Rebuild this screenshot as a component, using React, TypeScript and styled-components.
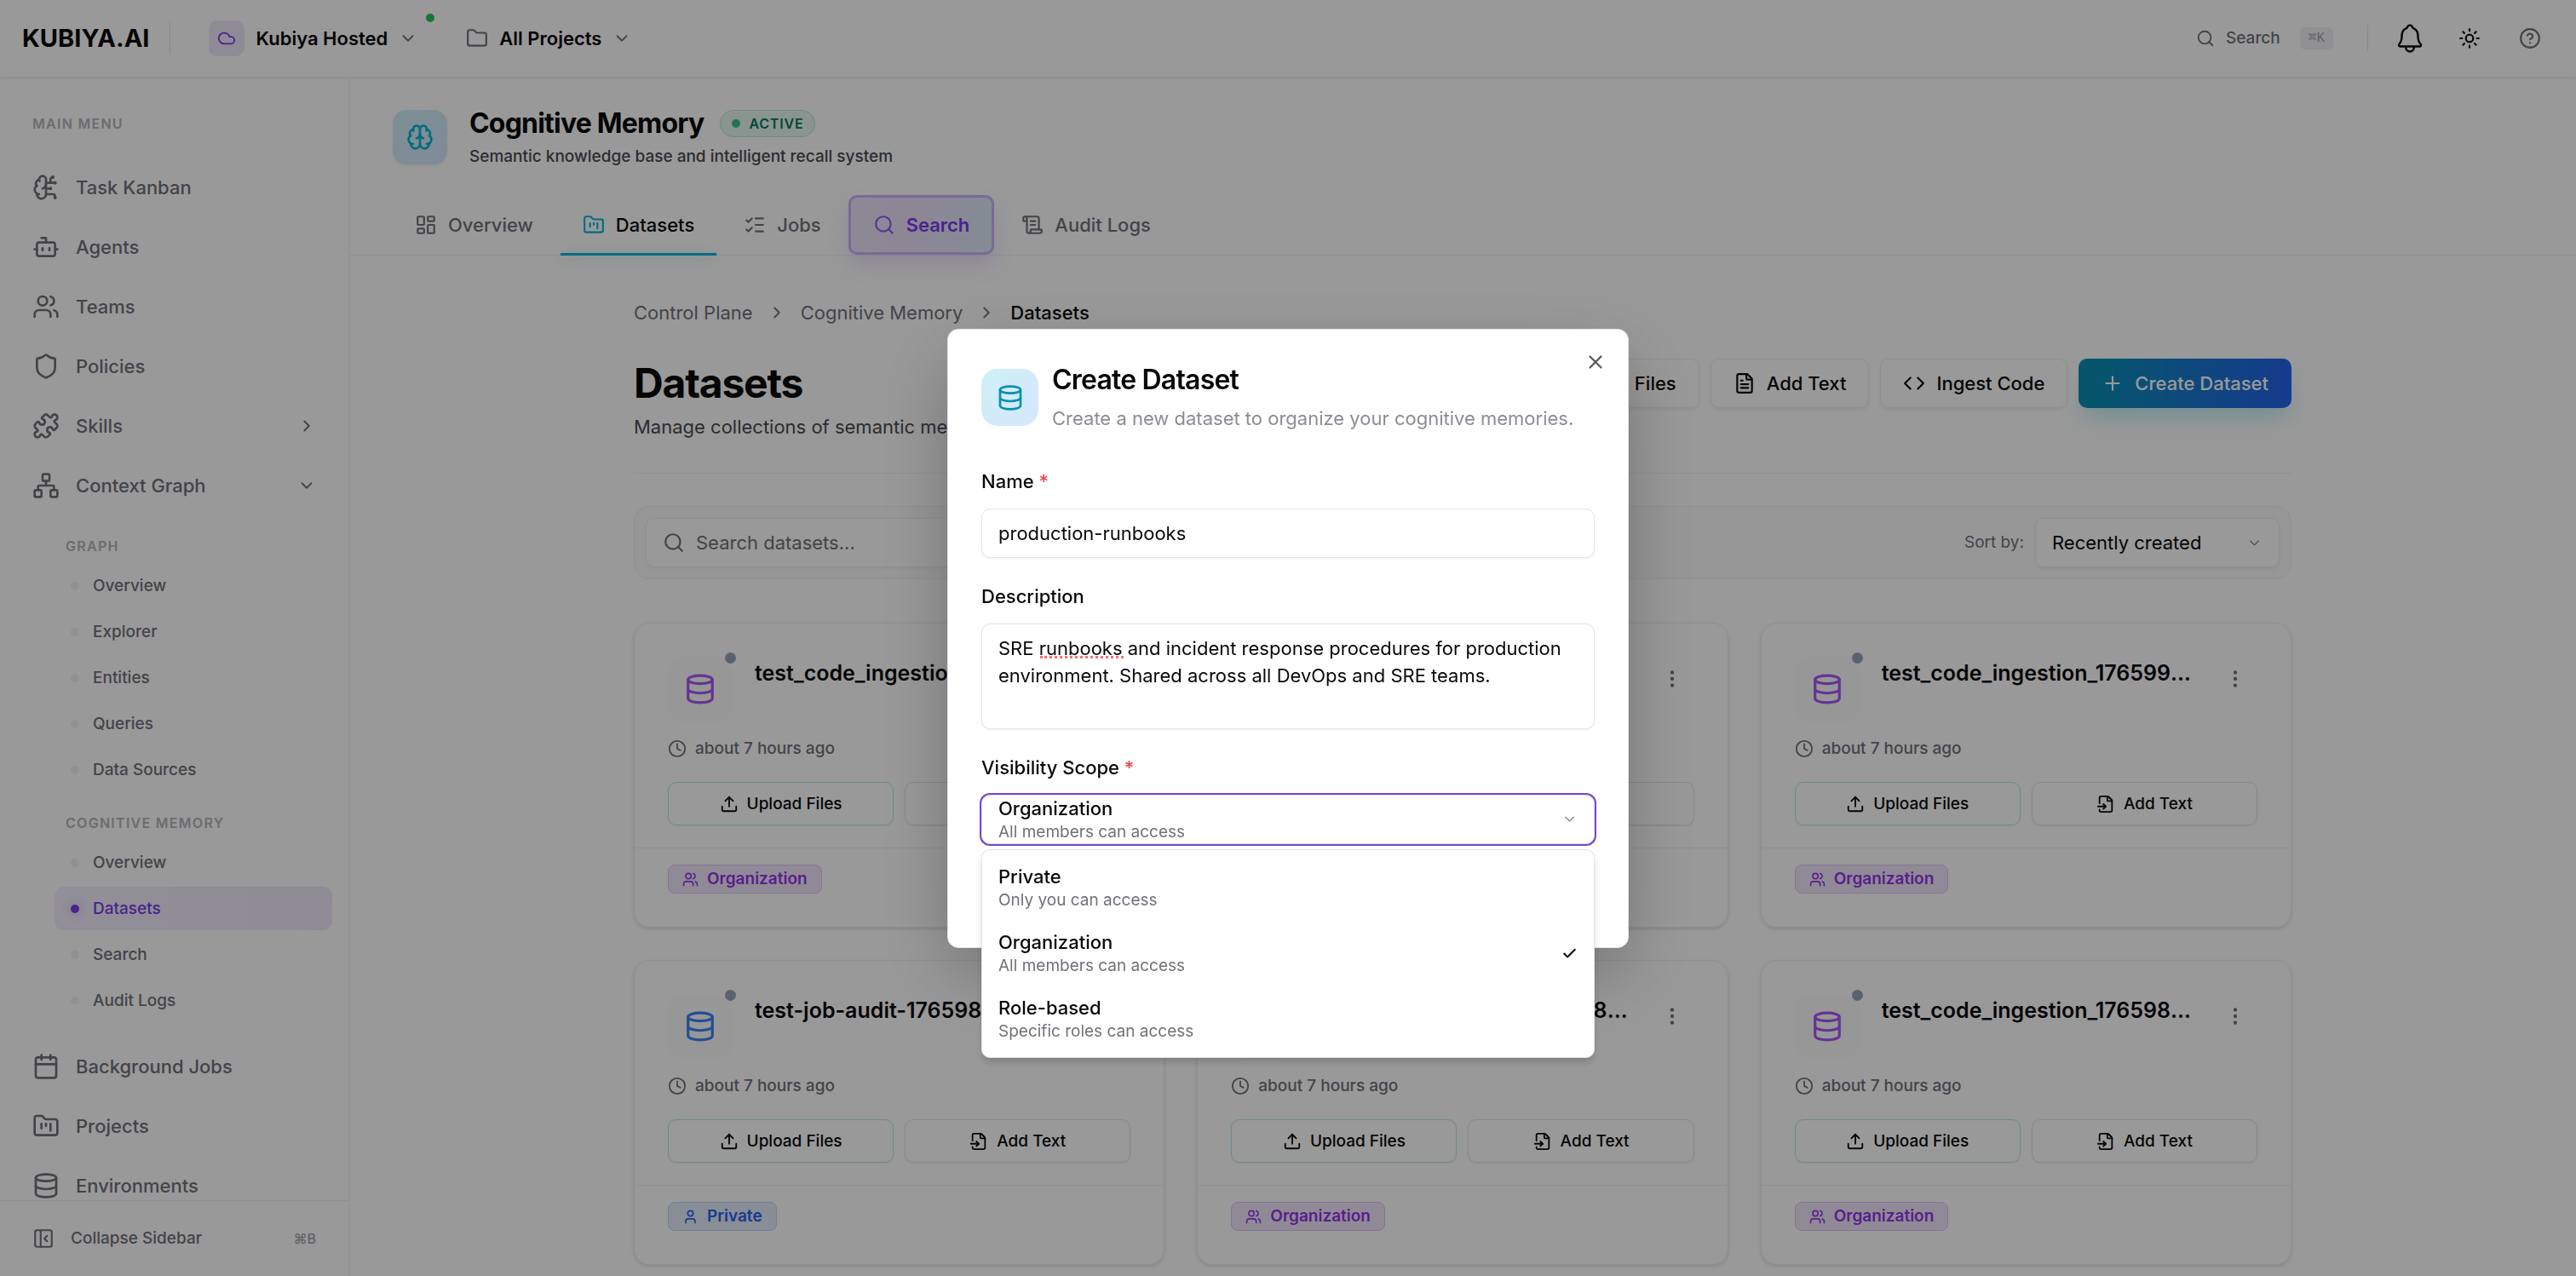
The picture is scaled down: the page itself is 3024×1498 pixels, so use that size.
import React from "react";
import styled, { createGlobalStyle, css } from "styled-components";
import {
  Bot,
  Brain,
  BrainCircuit,
  Calendar,
  Check,
  ChevronDown,
  ChevronRight,
  CircleHelp,
  Clock,
  Cloud,
  Code,
  Database,
  EllipsisVertical,
  FileInput,
  FileText,
  Folder,
  FolderKanban,
  LayoutDashboard,
  ListChecks,
  Network,
  PanelLeftClose,
  Plus,
  Puzzle,
  ScrollText,
  Search,
  Shield,
  Sun,
  Upload,
  User,
  Users,
  X,
} from "lucide-react";
import { IoNotificationsOutline } from "react-icons/io5";

const color = {
  ink: "#09090b",
  soft: "#4a4a52",
  muted: "#71717a",
  faint: "#b4b4ba",
  line: "#f0f0f2",
  edge: "#e4e4e7",
  violet: "#7c3aed",
  cyan: "#06b6d4",
};

const GlobalStyle = createGlobalStyle`
  *, *::before, *::after { box-sizing: border-box; }
  html, body, #root { height: 100%; }
  body {
    margin: 0;
    background: #fff;
    color: ${color.ink};
    font-family: Inter, "Liberation Sans", sans-serif;
    font-optical-sizing: none;
    font-size: 22px;
    line-height: 32px;
    -webkit-font-smoothing: antialiased;
  }
  h1, h2, h3, p, ul { margin: 0; padding: 0; }
  ul { list-style: none; }
  a { color: inherit; text-decoration: none; }
  button, input, textarea, select { font: inherit; color: inherit; margin: 0; }
  button { background: none; border: 0; padding: 0; cursor: pointer; }
  svg { flex: none; display: block; }
`;

const Page = styled.div`
  height: 100%;
  display: flex;
  flex-direction: column;
  overflow: hidden;
`;

/* Top bar */

const TopBar = styled.header`
  flex: none;
  height: 91px;
  padding: 0 41px 0 26px;
  display: flex;
  align-items: center;
  justify-content: space-between;
  border-bottom: 1px solid ${color.line};
  box-shadow: 0 2px 3px rgba(0, 0, 0, 0.04);
`;

const BarGroup = styled.div<{ $gap: number }>`
  display: flex;
  align-items: center;
  gap: ${(p) => p.$gap}px;
`;

const Logo = styled.a`
  font-size: 29px;
  font-weight: 700;
`;

const BarDivider = styled.span<{ $height: number }>`
  width: 1px;
  height: ${(p) => p.$height}px;
  background: ${color.edge};
`;

const Switcher = styled.button`
  position: relative;
  display: flex;
  align-items: center;
  gap: 13px;
  font-weight: 600;

  > svg {
    color: ${color.muted};
  }
`;

const CloudBox = styled.span`
  width: 42px;
  height: 42px;
  display: grid;
  place-items: center;
  border-radius: 10px;
  background: #efe8fb;
  color: ${color.violet};
`;

const OnlineDot = styled.span`
  position: absolute;
  top: -8px;
  right: -20px;
  width: 10px;
  height: 10px;
  border-radius: 50%;
  background: #22c55e;
`;

const SearchButton = styled.button`
  display: flex;
  align-items: center;
  gap: 13px;
  color: ${color.muted};
  font-size: 19px;
  line-height: 26px;
  font-weight: 500;
`;

const Kbd = styled.kbd`
  margin-left: 10px;
  padding: 2px 10px;
  border-radius: 6px;
  background: #f1f1f3;
  color: #a1a1aa;
  font: 16px/22px "Liberation Mono", monospace;
`;

const IconButton = styled.button<{ $size: number; $muted?: boolean }>`
  width: ${(p) => p.$size}px;
  height: ${(p) => p.$size}px;
  display: grid;
  place-items: center;
  color: ${(p) => (p.$muted ? color.muted : color.ink)};
`;

/* Sidebar */

const Body = styled.div`
  flex: 1;
  min-height: 0;
  display: flex;
`;

const Sidebar = styled.aside`
  flex: none;
  width: 410px;
  display: flex;
  flex-direction: column;
  border-right: 1px solid ${color.line};
`;

const Nav = styled.nav`
  flex: 1;
  min-height: 0;
  overflow: hidden;
  padding: 43px 19px 0;
`;

const SectionLabel = styled.h2<{ $sub?: boolean }>`
  padding: ${(p) => (p.$sub ? "0 13px" : "0 19px")};
  margin: ${(p) => (p.$sub ? "26px 0 10px" : "0 0 32px")};
  color: ${color.faint};
  font-size: 16px;
  line-height: 22px;
  font-weight: 600;
  letter-spacing: 0.08em;
  text-transform: uppercase;
`;

const NavList = styled.ul`
  display: flex;
  flex-direction: column;
  gap: 6px;
`;

const NavLink = styled.a`
  height: 64px;
  padding: 0 19px;
  display: flex;
  align-items: center;
  gap: 19px;
  color: ${color.muted};
  font-weight: 500;

  svg:nth-of-type(2) {
    margin-left: auto;
  }
`;

const SubNav = styled.div`
  padding: 2px 0 20px 45px;
`;

const SubList = styled.ul`
  display: flex;
  flex-direction: column;
  gap: 3px;
`;

const SubLink = styled.a<{ $active: boolean }>`
  height: 51px;
  padding: 0 19px;
  display: flex;
  align-items: center;
  gap: 16px;
  border-radius: 11px;
  color: ${color.muted};
  font-size: 19px;
  line-height: 26px;
  font-weight: 500;

  &::before {
    content: "";
    width: 10px;
    height: 10px;
    border-radius: 50%;
    background: #f2f2f4;
  }

  ${(p) =>
    p.$active &&
    css`
      background: linear-gradient(90deg, #f4effe, #eee8f9);
      color: ${color.violet};

      &::before {
        background: ${color.violet};
        box-shadow: 0 0 13px rgba(124, 58, 237, 0.4);
      }
    `}
`;

const CollapseButton = styled.button`
  flex: none;
  height: 89px;
  padding: 0 38px;
  display: flex;
  align-items: center;
  gap: 19px;
  border-top: 1px solid ${color.line};
  color: ${color.muted};
  font-size: 19px;
  line-height: 26px;
  font-weight: 500;
`;

const Shortcut = styled.span`
  margin-left: auto;
  color: #a1a1aa;
  font-size: 16px;
  line-height: 22px;
`;

/* Main column */

const Main = styled.main`
  flex: 1;
  min-width: 0;
  overflow: hidden;
`;

const Hero = styled.section`
  padding: 33px 51px 32px;
  display: flex;
  align-items: center;
  gap: 26px;
`;

const HeroIcon = styled.span`
  width: 64px;
  height: 64px;
  display: grid;
  place-items: center;
  border-radius: 16px;
  background: linear-gradient(135deg, rgba(6, 182, 212, 0.2), rgba(59, 130, 246, 0.2));
  box-shadow: 0 2px 3px rgba(0, 0, 0, 0.06);
  color: ${color.cyan};
`;

const HeroTitleRow = styled.div`
  display: flex;
  align-items: center;
  gap: 19px;
`;

const HeroTitle = styled.h2`
  font-size: 32px;
  line-height: 42px;
  font-weight: 700;
  letter-spacing: -0.025em;
`;

const HeroText = styled.p`
  margin-top: 5px;
  color: ${color.soft};
  font-size: 19px;
  line-height: 26px;
  font-weight: 500;
`;

const Status = styled.span`
  height: 32px;
  padding: 0 13px;
  display: flex;
  align-items: center;
  gap: 10px;
  border: 1px solid #b5e6d3;
  border-radius: 16px;
  background: #e6f8f1;
  color: #047857;
  font-size: 16px;
  line-height: 22px;
  font-weight: 600;
  letter-spacing: 0.05em;
  text-transform: uppercase;

  &::before {
    content: "";
    width: 10px;
    height: 10px;
    border-radius: 50%;
    background: #3fbf8f;
  }
`;

const Tabs = styled.nav`
  padding: 0 51px;
  display: flex;
  gap: 6px;
  border-bottom: 1px solid ${color.line};
`;

const Tab = styled.a<{ $kind?: "active" | "accent" }>`
  position: relative;
  height: 70px;
  padding: 0 26px;
  display: flex;
  align-items: center;
  gap: 13px;
  color: ${color.muted};
  font-weight: 500;

  ${(p) =>
    p.$kind === "active" &&
    css`
      color: ${color.ink};

      svg {
        color: ${color.cyan};
      }

      &::after {
        content: "";
        position: absolute;
        left: 0;
        right: 0;
        bottom: -1px;
        height: 3px;
        background: ${color.cyan};
        box-shadow: 0 3px 16px rgba(6, 182, 212, 0.35);
      }
    `}

  ${(p) =>
    p.$kind === "accent" &&
    css`
      border: 3px solid #c8b2f7;
      border-radius: 10px;
      background: linear-gradient(90deg, #ebe4fb, #ece0f9 40%, #dde9f9);
      box-shadow: 0 13px 26px -3px rgba(139, 92, 246, 0.22);
      color: ${color.violet};
      font-weight: 600;

      svg {
        color: #8b5cf6;
      }
    `}
`;

const Content = styled.div`
  max-width: 2048px;
  margin: 0 auto;
  padding: 51px 51px 0;
`;

const Crumbs = styled.nav`
  display: flex;
  align-items: center;
  gap: 17px;
  color: ${color.muted};

  [aria-current] {
    color: ${color.ink};
    font-weight: 500;
  }
`;

const TitleRow = styled.div`
  padding: 32px 0 38px;
  display: flex;
  align-items: flex-start;
  justify-content: space-between;
  border-bottom: 1px solid ${color.line};
`;

const PageTitle = styled.h1`
  margin: 6px 0;
  font-size: 48px;
  line-height: 58px;
  font-weight: 700;
  letter-spacing: -0.025em;
`;

const PageText = styled.p`
  color: ${color.soft};
`;

const Actions = styled.div`
  padding-top: 6px;
  display: flex;
  gap: 13px;
`;

const ActionButton = styled.button<{ $primary?: boolean }>`
  height: 58px;
  padding: 0 26px;
  display: flex;
  align-items: center;
  gap: 13px;
  border: 1px solid ${color.line};
  border-radius: 10px;
  box-shadow: 0 2px 4px rgba(0, 0, 0, 0.06);
  font-weight: 500;

  ${(p) =>
    p.$primary &&
    css`
      border-color: transparent;
      background: linear-gradient(90deg, #0891b2, #2563eb) border-box;
      box-shadow: 0 16px 24px -5px rgba(6, 182, 212, 0.25);
      color: #fff;
    `}
`;

const Toolbar = styled.div`
  margin: 38px 0 51px;
  padding: 13px;
  display: flex;
  align-items: center;
  justify-content: space-between;
  border: 1px solid ${color.line};
  border-radius: 19px;
  background: #fcfcfd;
`;

const SearchField = styled.label`
  width: 640px;
  height: 58px;
  padding: 0 19px;
  display: flex;
  align-items: center;
  gap: 13px;
  border: 1px solid ${color.line};
  border-radius: 10px;
  background: #fff;
  box-shadow: 0 2px 4px rgba(0, 0, 0, 0.04);
  color: ${color.muted};

  input {
    flex: 1;
    min-width: 0;
    padding: 0;
    border: 0;
    outline: 0;
    background: none;
  }

  input::placeholder {
    color: ${color.muted};
    opacity: 1;
  }
`;

const SortGroup = styled.div`
  display: flex;
  align-items: center;
  gap: 13px;

  label {
    color: ${color.muted};
    font-size: 19px;
    line-height: 26px;
  }
`;

const SelectWrap = styled.div`
  width: 287px;
  height: 58px;
  display: grid;
  align-items: center;
  border: 1px solid ${color.line};
  border-radius: 10px;
  background: #fff;
  box-shadow: 0 2px 4px rgba(0, 0, 0, 0.06);

  select,
  svg {
    grid-area: 1 / 1;
  }

  select {
    height: 100%;
    padding: 0 19px;
    border: 0;
    background: none;
    appearance: none;
  }

  svg {
    justify-self: end;
    margin-right: 19px;
    color: ${color.muted};
    pointer-events: none;
  }
`;

/* Dataset cards */

const Grid = styled.div`
  display: grid;
  grid-template-columns: repeat(3, minmax(0, 1fr));
  gap: 38px;
`;

const Card = styled.article`
  border: 1px solid ${color.line};
  border-radius: 19px;
  box-shadow: 0 2px 4px rgba(0, 0, 0, 0.12);
`;

const CardBody = styled.div`
  padding: 39px 39px 26px;
`;

const CardTop = styled.div`
  display: flex;
  align-items: flex-start;
`;

const CardIcon = styled.span<{ $private?: boolean }>`
  position: relative;
  flex: none;
  width: 76px;
  height: 76px;
  margin-right: 26px;
  display: grid;
  place-items: center;
  border-radius: 19px;
  background: #fcfcfd;
  color: ${(p) => (p.$private ? "#3b82f6" : "#a855f7")};
`;

const StateDot = styled.span`
  position: absolute;
  top: -5px;
  right: -4px;
  width: 13px;
  height: 13px;
  border-radius: 50%;
  background: #94a3b8;
`;

const CardTitle = styled.h3`
  flex: 1;
  min-width: 0;
  margin-right: 13px;
  overflow: hidden;
  text-overflow: ellipsis;
  white-space: nowrap;
  font-size: 25px;
  line-height: 38px;
  font-weight: 600;
`;

const Meta = styled.p`
  margin: 19px 0 26px;
  display: flex;
  align-items: center;
  gap: 10px;
  color: ${color.muted};
  font-size: 19px;
  line-height: 26px;
  font-weight: 500;
`;

const CardActions = styled.div`
  display: grid;
  grid-template-columns: 1fr 1fr;
  gap: 13px;
`;

const CardButton = styled.button<{ $tint?: boolean }>`
  height: 51px;
  display: flex;
  align-items: center;
  justify-content: center;
  gap: 10px;
  border: 1px solid ${(p) => (p.$tint ? "#b4e6ee" : color.edge)};
  border-radius: 10px;
  box-shadow: 0 1px 2px rgba(0, 0, 0, 0.06);
  font-size: 19px;
  line-height: 26px;
  font-weight: 500;
`;

const CardFoot = styled.footer`
  padding: 19px 39px 39px;
  display: flex;
  border-top: 1px solid ${color.line};
`;

const Badge = styled.span<{ $private?: boolean }>`
  height: 34px;
  padding: 0 16px;
  display: flex;
  align-items: center;
  gap: 10px;
  border: 1px solid ${(p) => (p.$private ? "#bcd3fb" : "#dcc2f8")};
  border-radius: 8px;
  background: ${(p) => (p.$private ? "#e3ebfa" : "#f1e7fb")};
  color: ${(p) => (p.$private ? "#2563eb" : "#9333ea")};
  font-size: 19px;
  line-height: 26px;
  font-weight: 600;
`;

/* Dialog */

const Overlay = styled.div`
  position: fixed;
  inset: 0;
  display: flex;
  align-items: center;
  justify-content: center;
  background: rgba(0, 0, 0, 0.4);
`;

const Dialog = styled.div`
  position: relative;
  width: 800px;
  max-width: 100%;
  padding: 40px 39px 121px;
  border: 1px solid ${color.edge};
  border-radius: 13px;
  background: #fff;
  box-shadow: 0 32px 88px -8px rgba(0, 0, 0, 0.3);
`;

const CloseButton = styled.button`
  position: absolute;
  top: 25px;
  right: 25px;
  color: #55555c;
`;

const DialogHead = styled.div`
  margin-bottom: 42px;
  display: flex;
  align-items: center;
  gap: 16px;
`;

const DialogIcon = styled.span`
  width: 67px;
  height: 67px;
  display: grid;
  place-items: center;
  border-radius: 19px;
  background: linear-gradient(135deg, rgba(6, 182, 212, 0.2), rgba(59, 130, 246, 0.2));
  color: #0891b2;
`;

const DialogTitle = styled.h2`
  font-size: 32px;
  line-height: 38px;
  font-weight: 600;
  letter-spacing: -0.025em;
`;

const DialogText = styled.p`
  margin-top: 10px;
  color: #8c8c95;
`;

const Form = styled.form`
  display: flex;
  flex-direction: column;
  gap: 29px;
`;

const Field = styled.div`
  position: relative;
  display: flex;
  flex-direction: column;
  gap: 16px;

  label {
    font-weight: 500;
  }
`;

const Required = styled.span`
  color: #ef4444;
`;

const control = css`
  width: 100%;
  border: 1px solid ${color.edge};
  border-radius: 10px;
  background: #fff;
  box-shadow: 0 2px 2px rgba(0, 0, 0, 0.04);
  outline: 0;
`;

const TextInput = styled.input`
  ${control}
  height: 58px;
  padding: 0 19px;
`;

const TextArea = styled.textarea`
  ${control}
  display: block;
  height: 124px;
  padding: 12px 19px;
  resize: none;
`;

const TextAreaWrap = styled.div`
  position: relative;
`;

const SpellMark = styled.span`
  position: absolute;
  top: 38px;
  left: 69px;
  width: 98px;
  border-bottom: 3px dotted #f87171;
`;

const Trigger = styled.button`
  ${control}
  height: 58px;
  padding: 0 19px;
  display: flex;
  align-items: center;
  justify-content: space-between;
  text-align: left;
  box-shadow: 0 0 0 2px #7846d6;

  svg {
    color: ${color.muted};
  }
`;

const Choice = styled.span`
  display: flex;
  flex-direction: column;
  font-weight: 500;
  line-height: 30px;

  small {
    color: ${color.muted};
    font-size: 19px;
    line-height: 26px;
    font-weight: 400;
  }
`;

const Listbox = styled.ul`
  position: absolute;
  top: calc(100% + 6px);
  left: 0;
  right: 0;
  padding: 6px;
  border: 1px solid ${color.edge};
  border-radius: 10px;
  background: #fff;
  box-shadow: 0 6px 10px -2px rgba(0, 0, 0, 0.2);
`;

const Option = styled.li`
  height: 77px;
  padding: 0 13px;
  display: flex;
  align-items: center;
  justify-content: space-between;
`;

const navTop = [
  { label: "Task Kanban", Icon: BrainCircuit },
  { label: "Agents", Icon: Bot },
  { label: "Teams", Icon: Users },
  { label: "Policies", Icon: Shield },
  { label: "Skills", Icon: Puzzle, Chevron: ChevronRight },
  { label: "Context Graph", Icon: Network, Chevron: ChevronDown },
];

const navBottom = [
  { label: "Background Jobs", Icon: Calendar },
  { label: "Projects", Icon: FolderKanban },
  { label: "Environments", Icon: Database },
];

const subSections = [
  { title: "Graph", items: ["Overview", "Explorer", "Entities", "Queries", "Data Sources"] },
  { title: "Cognitive Memory", items: ["Overview", "Datasets", "Search", "Audit Logs"], active: "Datasets" },
];

const tabs: { label: string; Icon: typeof Bot; kind?: "active" | "accent" }[] = [
  { label: "Overview", Icon: LayoutDashboard },
  { label: "Datasets", Icon: FolderKanban, kind: "active" },
  { label: "Jobs", Icon: ListChecks },
  { label: "Search", Icon: Search, kind: "accent" },
  { label: "Audit Logs", Icon: ScrollText },
];

const datasets = [
  { name: "test_code_ingestion_1765992210" },
  { name: "test_code_ingestion_1765994874" },
  { name: "test_code_ingestion_1765990452" },
  { name: "test-job-audit-1765989930-run", isPrivate: true },
  { name: "test_code_ingestion_1765988617" },
  { name: "test_code_ingestion_1765986301" },
];

const scopes = [
  { label: "Private", hint: "Only you can access" },
  { label: "Organization", hint: "All members can access" },
  { label: "Role-based", hint: "Specific roles can access" },
];

function NavItems({ items }: { items: { label: string; Icon: typeof Bot; Chevron?: typeof Bot }[] }) {
  return (
    <NavList>
      {items.map(({ label, Icon, Chevron }) => (
        <li key={label}>
          <NavLink href="#">
            <Icon size={32} />
            {label}
            {Chevron && <Chevron size={22} />}
          </NavLink>
        </li>
      ))}
    </NavList>
  );
}

function DatasetCard({ name, isPrivate }: { name: string; isPrivate?: boolean }) {
  return (
    <Card>
      <CardBody>
        <CardTop>
          <CardIcon $private={isPrivate}>
            <Database size={38} />
            <StateDot />
          </CardIcon>
          <CardTitle>{name}</CardTitle>
          <IconButton $size={51} $muted aria-label="Dataset actions">
            <EllipsisVertical size={26} />
          </IconButton>
        </CardTop>
        <Meta>
          <Clock size={22} />
          about 7 hours ago
        </Meta>
        <CardActions>
          <CardButton $tint>
            <Upload size={22} />
            Upload Files
          </CardButton>
          <CardButton>
            <FileInput size={22} />
            Add Text
          </CardButton>
        </CardActions>
      </CardBody>
      <CardFoot>
        <Badge $private={isPrivate}>
          {isPrivate ? <User size={19} /> : <Users size={19} />}
          {isPrivate ? "Private" : "Organization"}
        </Badge>
      </CardFoot>
    </Card>
  );
}

function CreateDatasetDialog() {
  return (
    <Overlay>
      <Dialog role="dialog" aria-modal="true" aria-labelledby="dialog-title">
        <CloseButton aria-label="Close">
          <X size={26} />
        </CloseButton>
        <DialogHead>
          <DialogIcon>
            <Database size={32} />
          </DialogIcon>
          <div>
            <DialogTitle id="dialog-title">Create Dataset</DialogTitle>
            <DialogText>Create a new dataset to organize your cognitive memories.</DialogText>
          </div>
        </DialogHead>
        <Form>
          <Field>
            <label htmlFor="name">
              Name <Required>*</Required>
            </label>
            <TextInput id="name" defaultValue="production-runbooks" />
          </Field>
          <Field>
            <label htmlFor="description">Description</label>
            <TextAreaWrap>
              <TextArea
                id="description"
                spellCheck={false}
                defaultValue="SRE runbooks and incident response procedures for production environment. Shared across all DevOps and SRE teams."
              />
              <SpellMark />
            </TextAreaWrap>
          </Field>
          <Field>
            <label htmlFor="scope">
              Visibility Scope <Required>*</Required>
            </label>
            <Trigger
              id="scope"
              type="button"
              role="combobox"
              aria-haspopup="listbox"
              aria-expanded="true"
              aria-controls="scope-list"
            >
              <Choice>
                Organization
                <small>All members can access</small>
              </Choice>
              <ChevronDown size={19} strokeWidth={1.5} />
            </Trigger>
            <Listbox id="scope-list" role="listbox">
              {scopes.map((s) => (
                <Option key={s.label} role="option" aria-selected={s.label === "Organization"}>
                  <Choice>
                    {s.label}
                    <small>{s.hint}</small>
                  </Choice>
                  {s.label === "Organization" && <Check size={19} strokeWidth={2.5} />}
                </Option>
              ))}
            </Listbox>
          </Field>
        </Form>
      </Dialog>
    </Overlay>
  );
}

export default function App() {
  return (
    <Page>
      <GlobalStyle />
      <TopBar>
        <BarGroup $gap={45}>
          <BarGroup $gap={24}>
            <Logo href="#">KUBIYA.AI</Logo>
            <BarDivider $height={38} />
          </BarGroup>
          <BarGroup $gap={57}>
            <Switcher>
              <CloudBox>
                <Cloud size={22} />
              </CloudBox>
              Kubiya Hosted
              <ChevronDown size={22} />
              <OnlineDot />
            </Switcher>
            <Switcher>
              <Folder size={26} />
              All Projects
              <ChevronDown size={22} />
            </Switcher>
          </BarGroup>
        </BarGroup>
        <BarGroup $gap={30}>
          <BarGroup $gap={40}>
            <SearchButton>
              <Search size={22} />
              Search
              <Kbd>⌘K</Kbd>
            </SearchButton>
            <BarDivider $height={32} />
          </BarGroup>
          <BarGroup $gap={38}>
            <IconButton $size={38} aria-label="Notifications">
              <IoNotificationsOutline size={38} />
            </IconButton>
            <BarGroup $gap={45}>
              <IconButton $size={26} aria-label="Theme">
                <Sun size={26} />
              </IconButton>
              <IconButton $size={26} $muted aria-label="Help">
                <CircleHelp size={26} />
              </IconButton>
            </BarGroup>
          </BarGroup>
        </BarGroup>
      </TopBar>
      <Body>
        <Sidebar>
          <Nav aria-label="Main menu">
            <SectionLabel>Main Menu</SectionLabel>
            <NavItems items={navTop} />
            <SubNav>
              {subSections.map((section) => (
                <div key={section.title}>
                  <SectionLabel $sub>{section.title}</SectionLabel>
                  <SubList>
                    {section.items.map((item) => (
                      <li key={item}>
                        <SubLink href="#" $active={item === section.active}>
                          {item}
                        </SubLink>
                      </li>
                    ))}
                  </SubList>
                </div>
              ))}
            </SubNav>
            <NavItems items={navBottom} />
          </Nav>
          <CollapseButton>
            <PanelLeftClose size={26} />
            Collapse Sidebar
            <Shortcut>⌘B</Shortcut>
          </CollapseButton>
        </Sidebar>
        <Main>
          <Hero>
            <HeroIcon>
              <Brain size={32} />
            </HeroIcon>
            <div>
              <HeroTitleRow>
                <HeroTitle>Cognitive Memory</HeroTitle>
                <Status>Active</Status>
              </HeroTitleRow>
              <HeroText>Semantic knowledge base and intelligent recall system</HeroText>
            </div>
          </Hero>
          <Tabs aria-label="Sections">
            {tabs.map(({ label, Icon, kind }) => (
              <Tab key={label} href="#" $kind={kind}>
                <Icon size={26} />
                {label}
              </Tab>
            ))}
          </Tabs>
          <Content>
            <Crumbs aria-label="Breadcrumb">
              <a href="#">Control Plane</a>
              <ChevronRight size={22} />
              <a href="#">Cognitive Memory</a>
              <ChevronRight size={22} />
              <span aria-current="page">Datasets</span>
            </Crumbs>
            <TitleRow>
              <div>
                <PageTitle>Datasets</PageTitle>
                <PageText>Manage collections of semantic memories</PageText>
              </div>
              <Actions>
                <ActionButton>
                  <Upload size={26} />
                  Upload Files
                </ActionButton>
                <ActionButton>
                  <FileText size={26} />
                  Add Text
                </ActionButton>
                <ActionButton>
                  <Code size={26} />
                  Ingest Code
                </ActionButton>
                <ActionButton $primary>
                  <Plus size={26} />
                  Create Dataset
                </ActionButton>
              </Actions>
            </TitleRow>
            <Toolbar>
              <SearchField>
                <Search size={26} />
                <input type="search" placeholder="Search datasets..." aria-label="Search datasets" />
              </SearchField>
              <SortGroup>
                <label htmlFor="sort">Sort by:</label>
                <SelectWrap>
                  <select id="sort" defaultValue="recent">
                    <option value="recent">Recently created</option>
                  </select>
                  <ChevronDown size={19} strokeWidth={1.5} />
                </SelectWrap>
              </SortGroup>
            </Toolbar>
            <Grid>
              {datasets.map((d) => (
                <DatasetCard key={d.name} {...d} />
              ))}
            </Grid>
          </Content>
        </Main>
      </Body>
      <CreateDatasetDialog />
    </Page>
  );
}
